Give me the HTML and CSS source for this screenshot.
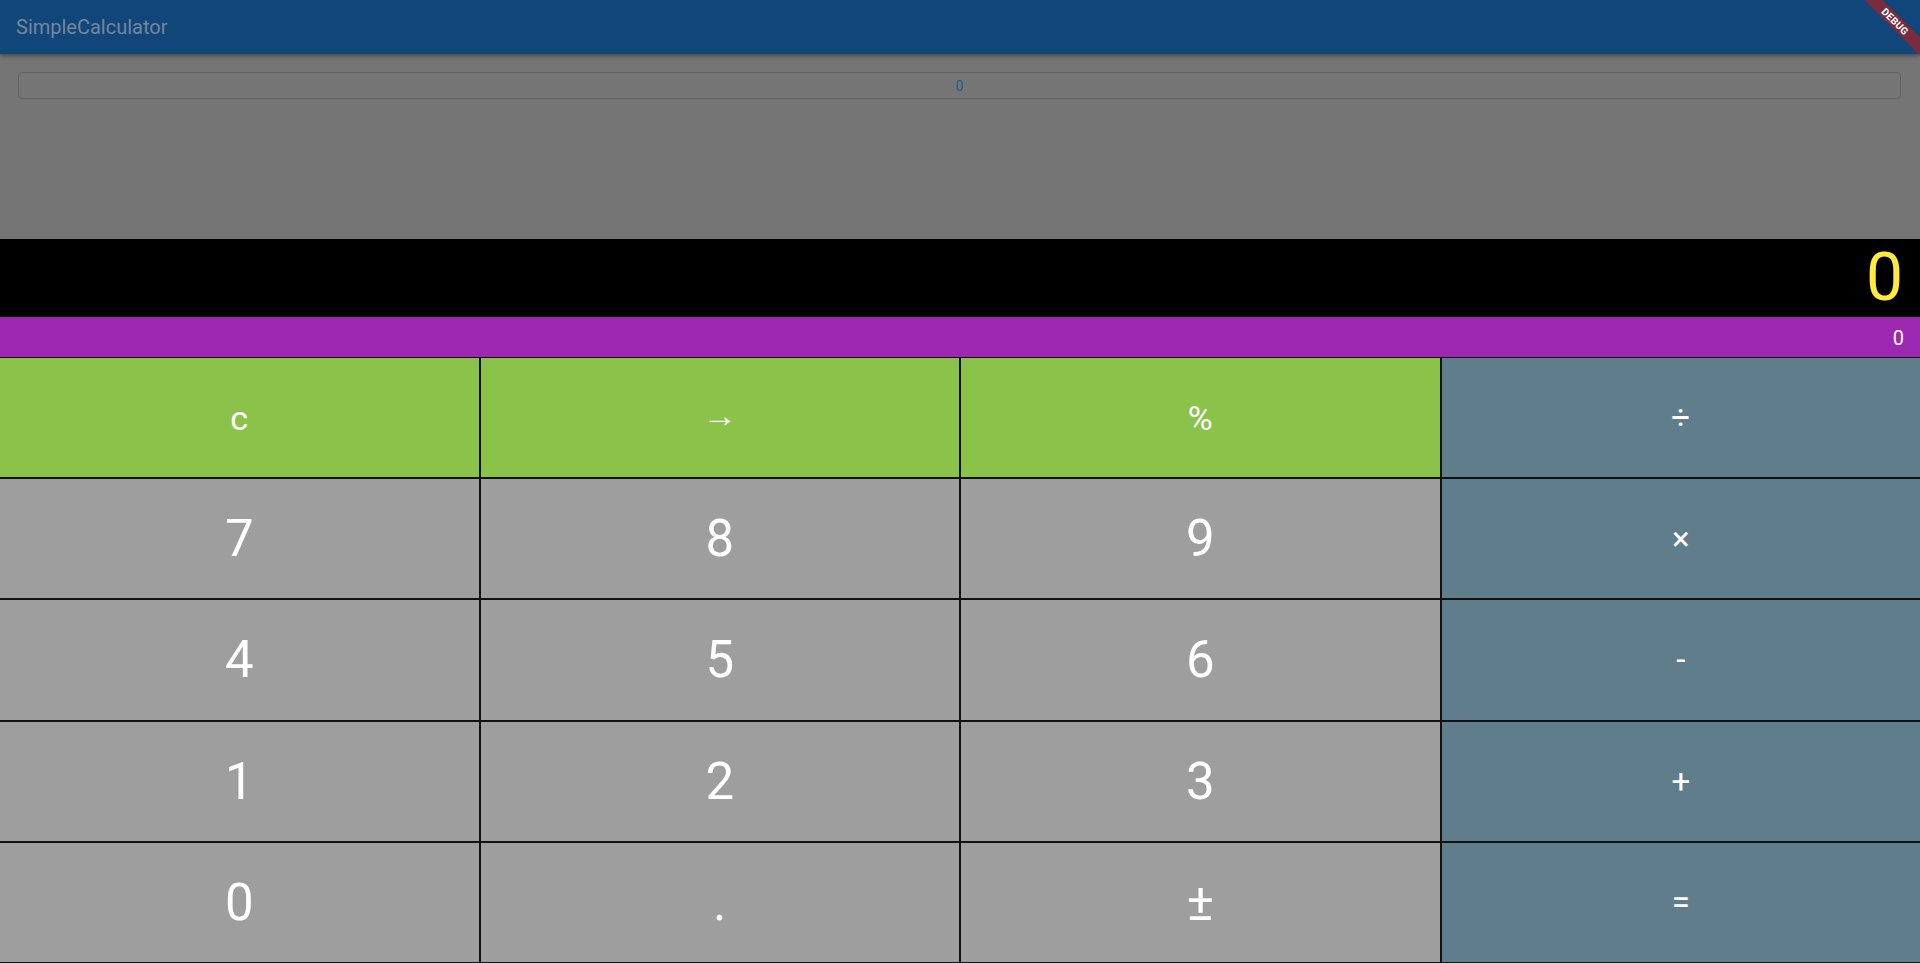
FILE: index.html
```html
<!DOCTYPE html>
<html>
<head>
<meta charset="utf-8">
<link rel="stylesheet" href="styles.css">
</head>
<body>
<div class="app">
  <header class="appbar"><span class="title">SimpleCalculator</span></header>
  <div class="banner"><span>DEBUG</span></div>
  <section class="top">
    <div class="field">0</div>
  </section>
  <section class="display">0</section>
  <section class="sub">0</section>
  <section class="keys">
    <div class="key fn">c</div>
    <div class="key fn arrow">→</div>
    <div class="key fn">%</div>
    <div class="key op">÷</div>
    <div class="key num">7</div>
    <div class="key num">8</div>
    <div class="key num">9</div>
    <div class="key op">×</div>
    <div class="key num">4</div>
    <div class="key num">5</div>
    <div class="key num">6</div>
    <div class="key op">-</div>
    <div class="key num">1</div>
    <div class="key num">2</div>
    <div class="key num">3</div>
    <div class="key op">+</div>
    <div class="key num">0</div>
    <div class="key num">.</div>
    <div class="key num">±</div>
    <div class="key op">=</div>
  </section>
</div>
</body>
</html>
```

FILE: styles.css
```css
html, body {
  margin: 0;
  padding: 0;
  height: 100%;
  overflow: hidden;
  font-family: Roboto, "Liberation Sans", sans-serif;
}
.app {
  position: relative;
  display: flex;
  flex-direction: column;
  height: 963px;
  background: #000;
}
.appbar {
  position: relative;
  z-index: 2;
  height: 54px;
  flex: none;
  background: #10467a;
  display: flex;
  align-items: center;
  padding-left: 16px;
  box-shadow: 0 2px 4px rgba(0,0,0,0.35);
}
.title {
  color: #77879a;
  font-size: 20px;
}
.banner {
  position: absolute;
  z-index: 3;
  top: 15px;
  left: 1835px;
  width: 120px;
  height: 13px;
  background: rgba(183, 28, 28, 0.63);
  transform: rotate(45deg);
  display: flex;
  align-items: center;
  justify-content: center;
}
.banner span {
  color: #fff;
  font-weight: 700;
  font-size: 10px;
  letter-spacing: 0.3px;
}
.top {
  height: 185px;
  flex: none;
  background: #757575;
  padding: 18px 19px 0 18px;
  box-sizing: border-box;
}
.field {
  height: 27px;
  border: 1px solid #626262;
  border-radius: 4px;
  box-sizing: border-box;
  display: flex;
  align-items: center;
  justify-content: center;
  color: #1f5a92;
  font-size: 14px;
}
.display {
  height: 78px;
  flex: none;
  background: #000;
  color: #ffeb3b;
  font-size: 66px;
  display: flex;
  align-items: center;
  justify-content: flex-end;
  padding-right: 17px;
  line-height: 1;
}
.sub {
  height: 40px;
  flex: none;
  background: #9c27b0;
  color: #fff;
  font-size: 20px;
  display: flex;
  align-items: center;
  justify-content: flex-end;
  padding-right: 16px;
  padding-top: 1px;
  box-sizing: border-box;
}
.keys {
  flex: 1;
  min-height: 0;
  display: grid;
  grid-template-columns: repeat(4, 1fr);
  grid-template-rows: repeat(5, 1fr);
  gap: 2px;
  padding-top: 1px;
  padding-bottom: 1px;
  background: #111;
}
.key {
  display: flex;
  align-items: center;
  justify-content: center;
  color: #fff;
  line-height: 1;
  min-height: 0;
}
.fn {
  background: #8bc34a;
  font-size: 34px;
}
.arrow {
  padding-bottom: 6px;
}
.num {
  background: #9e9e9e;
  font-size: 51px;
}
.op {
  background: #607d8b;
  font-size: 33px;
}
```
